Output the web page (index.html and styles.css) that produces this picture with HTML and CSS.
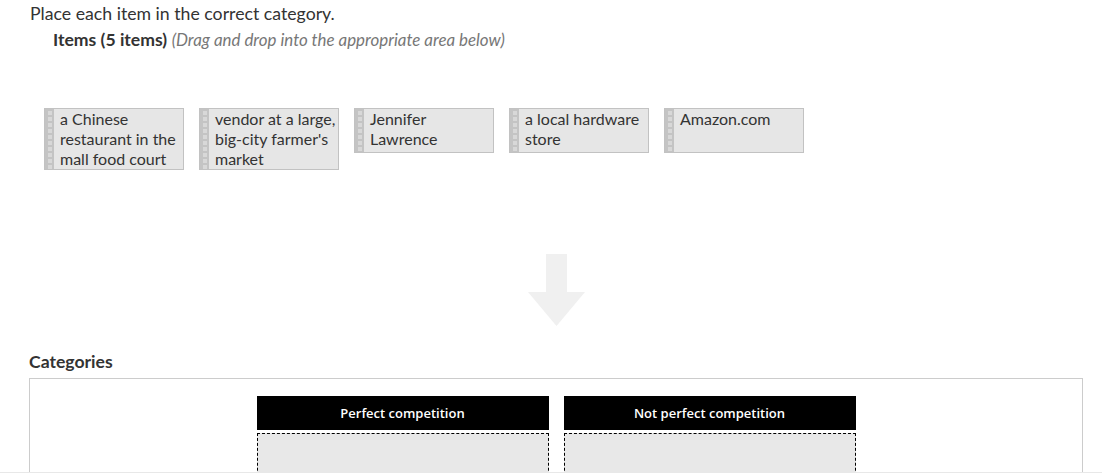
FILE: index.html
```html
<!DOCTYPE html>
<html lang="en">
<head>
  <meta charset="UTF-8" />
  <title>Categorize Items</title>
  <link rel="stylesheet" href="styles.css">
</head>
<body>
<div class="page">
  <p class="prompt">Place each item in the correct category.</p>

  <!-- Item bank -->
  <div class="items-head">
    <b>Items (5 items)</b> <i>(Drag and drop into the appropriate area below)</i>
  </div>
  <div class="items">
    <div class="item">a Chinese restaurant in the mall food court</div>
    <div class="item">vendor at a large, big-city farmer's market</div>
    <div class="item">Jennifer Lawrence</div>
    <div class="item">a local hardware store</div>
    <div class="item">Amazon.com</div>
  </div>

  <div class="arrow">
    <svg width="57" height="72" viewBox="0 0 57 72"><path d="M18 0H39V38H57L28.5 72L0 38H18Z" fill="#f0f0f0"/></svg>
  </div>

  <!-- Categories -->
  <h3 class="cat-title">Categories</h3>
  <div class="cat-box">
    <div class="cat">
      <div class="cat-head">Perfect competition</div>
      <div class="drop"></div>
    </div>
    <div class="cat">
      <div class="cat-head">Not perfect competition</div>
      <div class="drop"></div>
    </div>
  </div>
</div>
</body>
</html>
```

FILE: styles.css
```css
body {
  margin: 0;
  font-family: Lato, "Open Sans", sans-serif;
  color: #333;
  background: #fff;
}
.page {
  height: 472px;
  overflow: hidden;
  border-bottom: 1px solid #e8e8e8;
}
.prompt {
  margin: 0;
  padding: 3px 0 0 30px;
  font-size: 17.7px;
  line-height: 22px;
}
.items-head {
  padding: 4px 0 0 53px;
  font-size: 17.6px;
  line-height: 22px;
}
.items-head i {
  font-size: 16.9px;
  color: #777;
}
.items {
  display: flex;
  align-items: flex-start;
  gap: 15px;
  padding: 57px 0 0 44px;
}
.item {
  position: relative;
  width: 123px;
  min-height: 43px;
  padding-left: 15px;
  background: #e6e6e6;
  border: 1px solid #c2c2c2;
  font-size: 16px;
  line-height: 20px;
  color: #333;
}
/* grip strip on the left edge of each tile */
.item::before {
  content: "";
  position: absolute;
  left: 0;
  top: 0;
  bottom: 0;
  width: 9px;
  background:
    repeating-linear-gradient(to bottom, #c4c4c4 0 2px, #d8d8d8 2px 6px) 3px 0 / 4px 100% no-repeat,
    #c4c4c4;
}
.arrow {
  display: flex;
  justify-content: center;
  padding: 84px 19px 0 29px;
}
.arrow svg {
  display: block;
}
.cat-title {
  margin: 0;
  padding: 25px 0 0 29px;
  font-size: 17.6px;
  line-height: 22px;
  font-weight: 700;
}
.cat-box {
  margin: 5px 19px 0 29px;
  border: 1px solid #ccc;
  padding: 17px 0 0;
  display: flex;
  justify-content: center;
  gap: 15px;
  height: 200px;
}
.cat {
  width: 292px;
}
.cat-head {
  background: #000;
  color: #fff;
  font-family: "Open Sans", sans-serif;
  font-weight: 600;
  font-size: 13px;
  height: 34px;
  line-height: 34px;
  text-align: center;
}
.drop {
  margin-top: 3px;
  height: 120px;
  background: #e8e8e8;
  border: 1px dashed #000;
}
```
